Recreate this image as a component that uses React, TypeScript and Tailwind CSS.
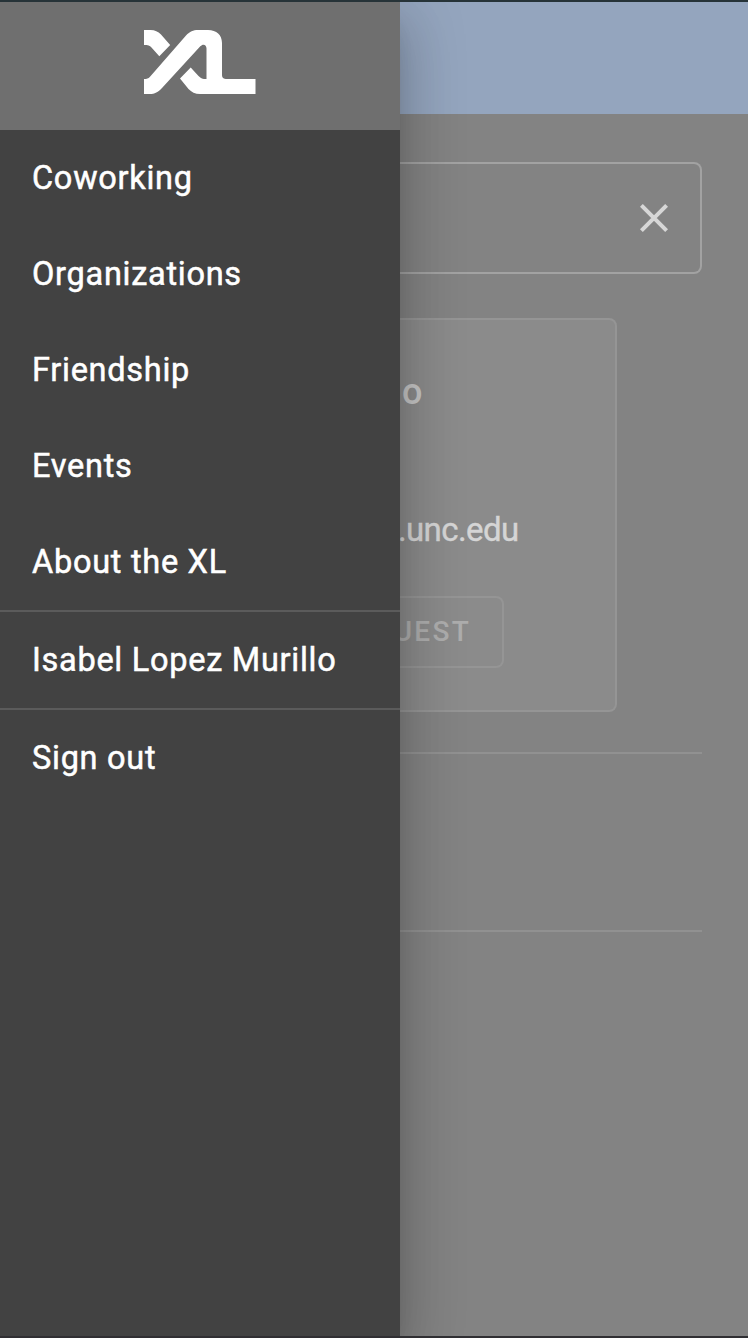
const links = ["Coworking", "Organizations", "Friendship", "Events", "About the XL"];

function Logo() {
  return (
    <svg width="112" height="64" viewBox="0 0 112 64" fill="#fff" role="img" aria-label="XL">
      <path d="M0 0H6.500C11 0 14 1.500 17 4.500L26.200 15L15.300 26.200L7.500 17.500C5.800 15.600 4 15 0 15Z" />
      <path
        fillRule="evenodd"
        d="M0 49C3 49 4.200 48.600 6 46.700L42 5.500C46 1.400 49 0 54 0H64C72.500 0 78 5 78 13V44.500C78 48 79.500 49 83 49H111.500V64H56C51 64 47.500 62 44.500 59L36 48.500L46.700 37.500L54.500 46C57 48.500 58.500 49 62.500 49V18.500C62.500 14.300 58.800 13.600 56.300 16.300L18 58C14 62 11 64 5.500 64H0Z"
      />
    </svg>
  );
}

function NavItem({ label }: { label: string }) {
  return (
    <a className="flex h-24 items-center px-8 pt-px text-[32.5px] leading-none tracking-[0.72px] whitespace-nowrap text-white [-webkit-text-stroke:0.5px_white]">
      {label}
    </a>
  );
}

function Drawer() {
  return (
    <aside className="relative z-10 w-[400px] shrink-0 bg-[#424242] shadow-[0_16px_20px_-10px_rgba(0,0,0,0.2),0_32px_48px_4px_rgba(0,0,0,0.14),0_12px_60px_10px_rgba(0,0,0,0.12)]">
      <div className="flex h-32 justify-center bg-[#6f6f6f] pt-7">
        <Logo />
      </div>
      <nav>
        {links.map((label) => (
          <NavItem key={label} label={label} />
        ))}
        <div className="border-y-2 border-[#5b5b5b]">
          <NavItem label="Isabel Lopez Murillo" />
        </div>
        <NavItem label="Sign out" />
      </nav>
    </aside>
  );
}

function ProfileCard() {
  return (
    <section className="mt-11 flex h-[394px] w-[217px] flex-col items-start rounded-r-lg border-y-2 border-r-2 border-[#959595] bg-[#8b8b8b]">
      <h2 className="mt-[52px] flex h-10 w-[22.5px] items-center justify-end text-[36px] leading-none font-medium text-[#c5c5c5]">
        o
      </h2>
      <p className="mt-[97px] flex h-10 w-[118.5px] items-center justify-end text-[33px] leading-none tracking-[-0.6px] text-[#d5d5d5] [-webkit-text-stroke:0.4px_#d5d5d5]">
        .unc.edu
      </p>
      <button className="mt-[47px] flex h-[72px] w-[104px] items-center justify-end rounded-r-lg border-y-2 border-r-2 border-[#959595] pr-[31px] text-[28px] leading-none font-medium tracking-[2.3px] text-[#adadad]">
        UEST
      </button>
    </section>
  );
}

export default function App() {
  return (
    <div className="flex h-[1338px] w-[748px] overflow-hidden border-t-2 border-b-2 border-t-[#263338] border-b-[#302f33] bg-[#838383] font-['Roboto',sans-serif]">
      <Drawer />
      <main className="min-w-0 flex-1 overflow-hidden">
        <header className="h-28 bg-[#94a5be]" />
        <div className="pt-12 pr-[46px]">
          <div className="flex h-28 items-center justify-end rounded-r-lg border-y-2 border-r-2 border-[#a2a2a2] pr-8">
            <svg width="28" height="28" viewBox="0 0 28 28" stroke="#d7d7d7" strokeWidth="4" fill="none">
              <path d="M1.400 1.400L26.600 26.600M26.600 1.400L1.400 26.600" />
            </svg>
          </div>
          <ProfileCard />
          <hr className="mt-10 border-t-2 border-[#919191]" />
          <hr className="mt-44 border-t-2 border-[#919191]" />
        </div>
      </main>
    </div>
  );
}
